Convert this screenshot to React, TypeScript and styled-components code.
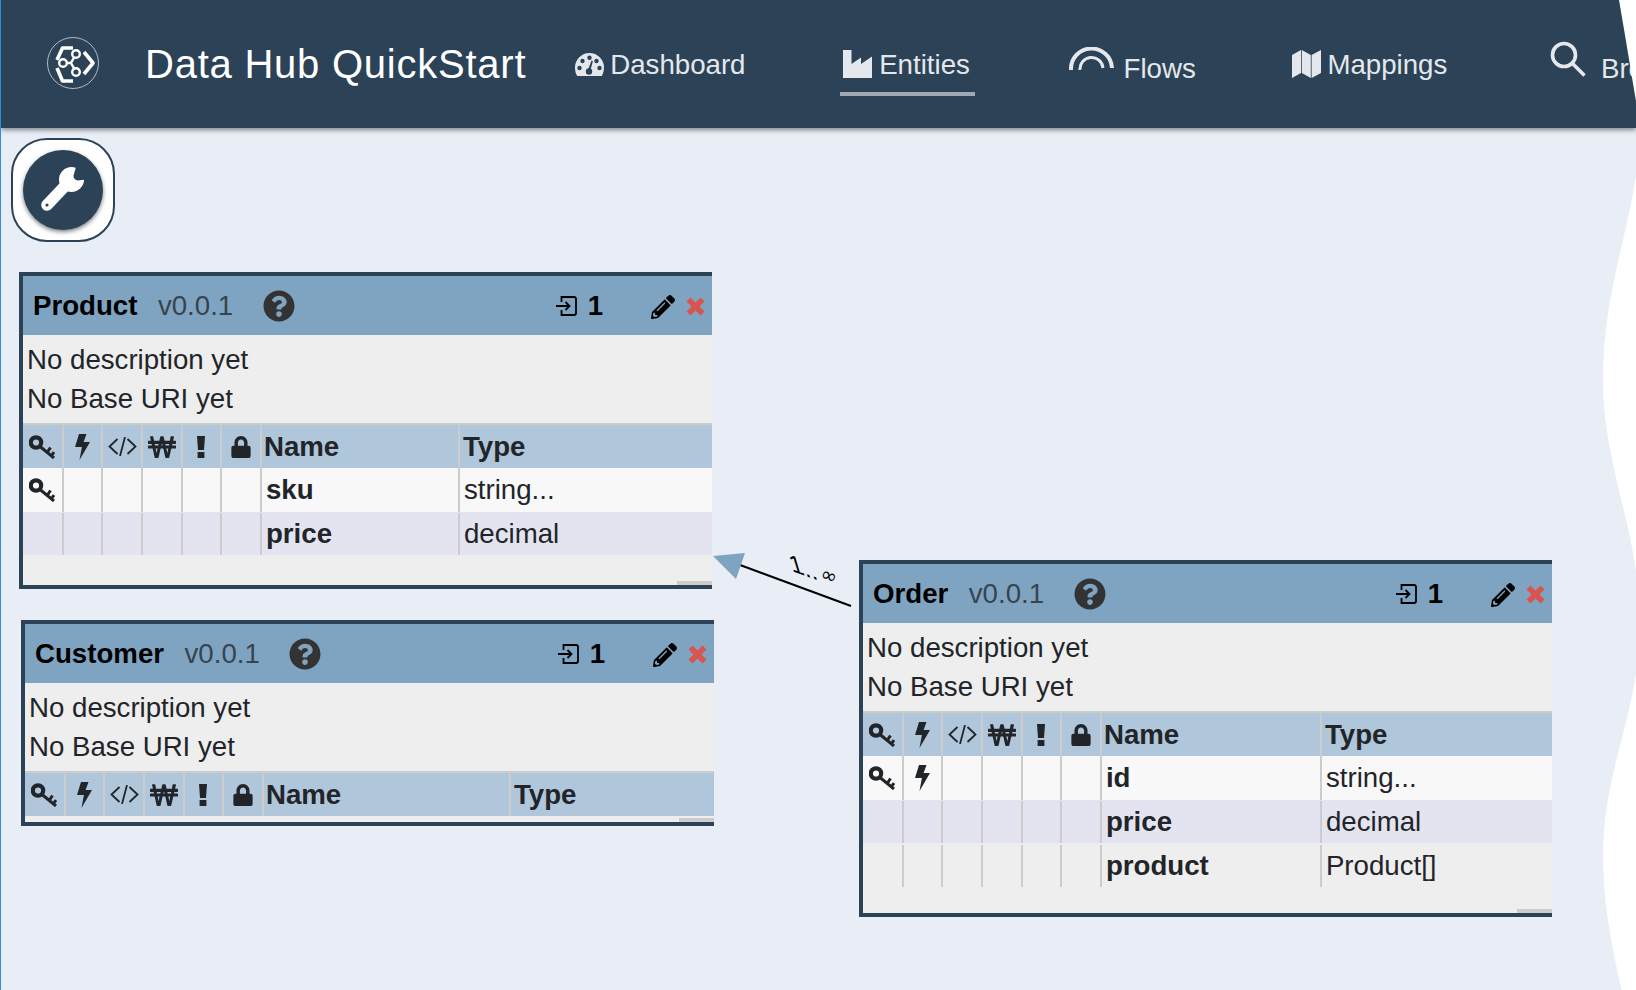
import React from "react";
import styled, { createGlobalStyle } from "styled-components";
import { FaLock, FaPencilAlt, FaQuestionCircle, FaWonSign } from "react-icons/fa";

const NAVY = "#2c4257";
const SEPARATOR = "#cccccc";

const GlobalStyle = createGlobalStyle`
	html, body {
		margin: 0;
		padding: 0;
		background: #ffffff;
	}
	body {
		font-family: "Liberation Sans", Arial, sans-serif;
		font-size: 27.65px;
		color: #212529;
	}
`;

const Page = styled.div`
	position: relative;
	width: 1636px;
	height: 990px;
	box-sizing: border-box;
	border-left: 1px solid #2b90d9;
	background: #e9eef6;
	overflow: hidden;
	display: flex;
	flex-direction: column;
`;

const Header = styled.header`
	height: 128px;
	flex-shrink: 0;
	display: flex;
	align-items: center;
	padding-left: 46px;
	background: ${NAVY};
	box-shadow: 0 2px 5px rgba(0, 0, 0, 0.45);
	position: relative;
	z-index: 1;
	white-space: nowrap;
`;

const Logo = styled.svg`
	width: 52px;
	height: 52px;
	flex-shrink: 0;
	margin-bottom: 2px;
`;

const Brand = styled.div`
	margin-left: 46px;
	font-size: 40px;
	letter-spacing: 0.76px;
	line-height: 46px;
	color: #ffffff;
	flex-shrink: 0;
`;

const Nav = styled.nav`
	display: flex;
	gap: 90.7px;
	margin-left: 46px;
	align-self: flex-end;
	padding-bottom: 32px;
`;

const NavItem = styled.a<{ $active?: boolean; $gap: number; $end?: number; $push?: number }>`
	display: flex;
	align-items: flex-end;
	gap: ${p => p.$gap}px;
	height: 52px;
	margin-left: ${p => p.$push ?? 0}px;
	padding: 0 ${p => p.$end ?? 3}px 0 3px;
	border-bottom: 4px solid ${p => (p.$active ? "#9ea9b3" : "transparent")};
	color: #e4e8ec;
	flex-shrink: 0;
`;

const NavLabel = styled.span<{ $low?: boolean }>`
	line-height: 32px;
	margin-bottom: ${p => (p.$low ? 7 : 11)}px;
`;

const NavIcon = styled.span<{ $lift: number }>`
	display: flex;
	margin-bottom: ${p => p.$lift}px;
	color: #e4e8ec;
`;

const Main = styled.main`
	position: relative;
	flex: 1;
	padding: 10px 0 0 10px;
`;

const ToolButton = styled.button`
	width: 104px;
	height: 104px;
	box-sizing: border-box;
	padding: 0;
	display: flex;
	align-items: center;
	justify-content: center;
	background: #ffffff;
	border: 2px solid ${NAVY};
	border-radius: 36px;
`;

const ToolDisc = styled.span`
	width: 80px;
	height: 80px;
	border-radius: 50%;
	display: flex;
	align-items: center;
	justify-content: center;
	background: ${NAVY};
	color: #ffffff;
	box-shadow: 0 2px 4px rgba(0, 0, 0, 0.5);
`;

const Box = styled.section<{ $x: number; $y: number }>`
	position: absolute;
	left: ${p => p.$x}px;
	top: ${p => p.$y}px;
	width: 693px;
	box-sizing: border-box;
	border: 4px solid ${NAVY};
	border-right: 0;
	background: #eeeeee;
`;

const TitleBar = styled.div`
	height: 59px;
	display: flex;
	align-items: center;
	padding-left: 10px;
	background: #7fa4c1;
	color: #000000;
`;

const Name = styled.strong`
	font-weight: 700;
`;

const Version = styled.span`
	margin-left: 20.5px;
	color: #37444f;
`;

const Help = styled.span`
	display: flex;
	margin-left: 29.5px;
	color: #333333;
`;

const Instances = styled.span`
	display: flex;
	align-items: center;
	gap: 11px;
	margin-left: auto;
	font-weight: 700;
`;

const Actions = styled.span`
	display: flex;
	align-items: center;
	gap: 11px;
	margin: 2px 7px 0 48px;
`;

const Description = styled.div`
	height: 88px;
	box-sizing: border-box;
	padding: 5px 4px 0;
	line-height: 39px;
`;

const ROW_OFFSET = { head: 0, odd: 0, even: 1, plain: 2 };

const Row = styled.div<{ $nameWidth: number; $kind: "head" | "odd" | "even" | "plain" }>`
	display: grid;
	grid-template-columns: 40.67px repeat(5, 39.67px) ${p => p.$nameWidth}px 1fr;
	height: 43.4px;
	box-sizing: border-box;
	padding-top: ${p => ROW_OFFSET[p.$kind]}px;
	background: ${p =>
		p.$kind === "head"
			? "#b0c6da"
			: p.$kind === "odd"
			  ? "#f8f8f8"
			  : p.$kind === "even"
			    ? "#e4e4f1"
			    : "transparent"};
	font-weight: ${p => (p.$kind === "head" ? 700 : 400)};
`;

const HeadRule = styled.div`
	height: 2px;
	background: ${SEPARATOR};
`;

const Cell = styled.div<{ $last?: boolean; $strong?: boolean; $inset?: number }>`
	display: flex;
	align-items: center;
	justify-content: ${p => (p.$inset === undefined ? "center" : "flex-start")};
	padding-left: ${p => p.$inset ?? 0}px;
	box-sizing: border-box;
	border-right: ${p => (p.$last ? "0" : `2px solid ${SEPARATOR}`)};
	font-weight: ${p => (p.$strong ? 700 : "inherit")};
	color: #212529;
	min-width: 0;
`;

const Footer = styled.div<{ $height: number }>`
	position: relative;
	height: ${p => p.$height}px;
`;

const ScrollHandle = styled.span`
	position: absolute;
	right: 0;
	bottom: 0;
	width: 35px;
	height: 4px;
	background: ${SEPARATOR};
`;

const Link = styled.svg`
	position: absolute;
	left: 699px;
	top: 412px;
	width: 170px;
	height: 60px;
	overflow: visible;
`;

const Torn = styled.svg`
	position: absolute;
	left: -1px;
	top: 0;
	width: 1636px;
	height: 990px;
	z-index: 2;
	pointer-events: none;
`;

function KeyIcon() {
	return (
		<svg width="26" height="24" viewBox="0 0 26 24" fill="none" stroke="currentColor" strokeWidth="3">
			<circle cx="7" cy="7.500" r="5.200" strokeWidth="4.200" />
			<path d="M11 11.500 25 23M18.500 17l3-4.500M22.500 20.500l2.500-3.500" />
		</svg>
	);
}

function BoltIcon() {
	return (
		<svg width="15" height="26" viewBox="0 0 15 26" fill="currentColor">
			<path d="M4 0h7.500L8.600 8H15L4.500 26l2.400-13H0z" />
		</svg>
	);
}

function CodeIcon() {
	return (
		<svg width="29" height="19" viewBox="0 0 29 19" fill="none" stroke="currentColor" strokeWidth="1.800">
			<path d="M9.500 2 1.500 9.500l8 7.500M19.500 2l8 7.500-8 7.500M17 0 12 19" />
		</svg>
	);
}

function RequiredIcon() {
	return (
		<svg width="8" height="22" viewBox="0 0 8 22" fill="currentColor">
			<path d="M0 0h8l-1 14H1zM.6 16h6.800v6H.6z" />
		</svg>
	);
}

function SignInIcon() {
	return (
		<svg width="21" height="20" viewBox="0 0 21 20" fill="none" stroke="currentColor" strokeWidth="1.800">
			<path d="M5.500 6V1h12.500a2 2 0 0 1 2 2v14a2 2 0 0 1-2 2H5.500v-5M0 10h13M9.500 6l4 4-4 4" />
		</svg>
	);
}

function RemoveIcon() {
	return (
		<svg width="19" height="19" viewBox="0 0 19 19" fill="none" stroke="#d9534f" strokeWidth="5.600">
			<path d="M2.500 2.500 16.500 16.500M16.500 2.500 2.500 16.500" />
		</svg>
	);
}

function DashboardIcon() {
	return (
		<svg width="29" height="23" viewBox="0 0 29 23" fill="currentColor">
			<path d="M14.500 0A14.500 14.500 0 0 1 29 14.500c0 3-.8 6-2.200 8.500H2.200A15 15 0 0 1 0 14.500 14.500 14.500 0 0 1 14.500 0z" />
			<g fill={NAVY}>
				<circle cx="4.500" cy="15" r="2.200" />
				<circle cx="7.500" cy="8" r="2.200" />
				<circle cx="14.500" cy="4.800" r="2.200" />
				<circle cx="24.500" cy="15" r="2.200" />
				<circle cx="21.500" cy="8" r="2.200" />
				<circle cx="14" cy="18.500" r="3.200" />
				<path d="M12.800 17.500 16.500 7.500l1.400.5-2.800 10.500z" />
			</g>
		</svg>
	);
}

function WrenchIcon() {
	return (
		<svg width="46" height="46" viewBox="0 0 46 46" fill="none">
			<path d="M7 38 25 19" stroke="#ffffff" strokeWidth="11.500" strokeLinecap="round" />
			<circle cx="31.500" cy="12.500" r="12.500" fill="#ffffff" />
			<path d="M36 0 33.500 8.500A4.500 4.500 0 0 0 38 13.500L46 12.500V0z" fill={NAVY} />
			<circle cx="7" cy="38" r="1.600" fill={NAVY} />
		</svg>
	);
}

const COLUMN_ICONS = [
	<KeyIcon key="key" />,
	<BoltIcon key="bolt" />,
	<CodeIcon key="code" />,
	<FaWonSign key="won" size={28} />,
	<RequiredIcon key="required" />,
	<FaLock key="lock" size={22} />,
];

type Property = { name: string; type: string; key?: boolean; bolt?: boolean };

type Entity = {
	name: string;
	x: number;
	y: number;
	nameWidth: number;
	footer: number;
	properties: Property[];
};

const ENTITIES: Entity[] = [
	{
		name: "Product",
		x: 18,
		y: 144,
		nameWidth: 198,
		footer: 30,
		properties: [
			{ name: "sku", type: "string...", key: true },
			{ name: "price", type: "decimal" },
		],
	},
	{
		name: "Customer",
		x: 20,
		y: 492,
		nameWidth: 247,
		footer: 6,
		properties: [],
	},
	{
		name: "Order",
		x: 858,
		y: 432,
		nameWidth: 220,
		footer: 26,
		properties: [
			{ name: "id", type: "string...", key: true, bolt: true },
			{ name: "price", type: "decimal" },
			{ name: "product", type: "Product[]" },
		],
	},
];

const ROW_KINDS = ["odd", "even", "plain"] as const;

function EntityBox({ entity }: { entity: Entity }) {
	return (
		<Box $x={entity.x} $y={entity.y}>
			<TitleBar>
				<Name>{entity.name}</Name>
				<Version>v0.0.1</Version>
				<Help>
					<FaQuestionCircle size={32} />
				</Help>
				<Instances>
					<SignInIcon />1
				</Instances>
				<Actions>
					<FaPencilAlt size={24} />
					<RemoveIcon />
				</Actions>
			</TitleBar>
			<Description>
				No description yet
				<br />
				No Base URI yet
			</Description>
			<HeadRule />
			<Row $nameWidth={entity.nameWidth} $kind="head">
				{COLUMN_ICONS.map(icon => (
					<Cell key={icon.key}>{icon}</Cell>
				))}
				<Cell $inset={2}>Name</Cell>
				<Cell $inset={3} $last>
					Type
				</Cell>
			</Row>
			{entity.properties.map((property, index) => (
				<Row key={property.name} $nameWidth={entity.nameWidth} $kind={ROW_KINDS[index]}>
					<Cell>{property.key && <KeyIcon />}</Cell>
					<Cell>{property.bolt && <BoltIcon />}</Cell>
					<Cell />
					<Cell />
					<Cell />
					<Cell />
					<Cell $inset={4} $strong>
						{property.name}
					</Cell>
					<Cell $inset={4} $last>
						{property.type}
					</Cell>
				</Row>
			))}
			<Footer $height={entity.footer}>
				<ScrollHandle />
			</Footer>
		</Box>
	);
}

export default function App() {
	return (
		<>
			<GlobalStyle />
			<Page>
				<Header>
					<Logo viewBox="0 0 52 52" fill="none" stroke="#ffffff">
						<circle cx="26" cy="26" r="25.5" strokeWidth="0.8" stroke="#d5dade" />
						<g strokeWidth="3.600" strokeLinejoin="round">
							<path d="M10 23 15.500 11H26M37 15l9 11-9 11M26 44H15.500L10 31" />
						</g>
						<g strokeWidth="2.400">
							<path d="M29 17 24 26 29 35M16 26H24" />
							<circle cx="29" cy="17" r="3.800" fill={NAVY} />
							<circle cx="16" cy="26" r="3.800" fill={NAVY} />
							<circle cx="29" cy="35" r="3.800" fill={NAVY} />
						</g>
					</Logo>
					<Brand>Data Hub QuickStart</Brand>
					<Nav>
						<NavItem $gap={6} $end={4}>
							<NavIcon $lift={16}>
								<DashboardIcon />
							</NavIcon>
							<NavLabel>Dashboard</NavLabel>
						</NavItem>
						<NavItem $gap={7} $end={5} $active>
							<NavIcon $lift={14}>
								<svg width="29" height="28" viewBox="0 0 29 28" fill="currentColor">
									<path d="M0 0h8.500v14L18 7.500V14l11-7.500V28H0z" />
								</svg>
							</NavIcon>
							<NavLabel>Entities</NavLabel>
						</NavItem>
						<NavItem $gap={10}>
							<NavIcon $lift={22}>
								<svg width="45" height="23" viewBox="0 0 45 23" fill="none" stroke="currentColor" strokeWidth="4">
									<path d="M2 23A20.500 20.500 0 0 1 43 21" />
									<path d="M11 23A11.500 11.500 0 0 1 34 21" strokeWidth="3" />
								</svg>
							</NavIcon>
							<NavLabel $low>Flows</NavLabel>
						</NavItem>
						<NavItem $gap={6}>
							<NavIcon $lift={14}>
								<svg width="29" height="28" viewBox="0 0 29 28" fill="currentColor">
									<path d="M0 5 9 0v23l-9 5zM9.800 0l9 5v23l-9-5zM19.600 5 29 0v23l-9.400 5z" />
								</svg>
							</NavIcon>
							<NavLabel>Mappings</NavLabel>
						</NavItem>
						<NavItem $gap={15} $push={6}>
							<NavIcon $lift={15}>
								<svg width="36" height="36" viewBox="0 0 36 36" fill="none" stroke="currentColor" strokeWidth="3.600">
									<circle cx="14" cy="14" r="11.500" />
									<path d="M22.500 22.500 34.500 34.500" />
								</svg>
							</NavIcon>
							<NavLabel $low>Browse</NavLabel>
						</NavItem>
					</Nav>
				</Header>
				<Main>
					<ToolButton>
						<ToolDisc>
							<WrenchIcon />
						</ToolDisc>
					</ToolButton>
					{ENTITIES.map(entity => (
						<EntityBox key={entity.name} entity={entity} />
					))}
					<Link viewBox="0 0 170 60">
						<path d="M38 24.300 151 66" stroke="#000000" strokeWidth="2" />
						<path d="M13 16 45 13 36 39z" fill="#7fa4c1" />
						<text transform="matrix(.94 .34 .29 .96 92 31)" fontFamily="Liberation Sans" fontSize="26">
							1..
						</text>
						<text x="119" y="39" transform="rotate(20 119 39)" fontFamily="DejaVu Sans" fontSize="20">
							∞
						</text>
					</Link>
				</Main>
				<Torn viewBox="0 0 1636 990">
					<path
						fill="#ffffff"
						d="M1619 0C1626 40 1634 90 1640 125C1640 210 1603 280 1603 378C1603 470 1640 530 1640 625C1640 710 1603 770 1603 855C1603 900 1612 950 1622 990H1640V0Z"
					/>
				</Torn>
			</Page>
		</>
	);
}
